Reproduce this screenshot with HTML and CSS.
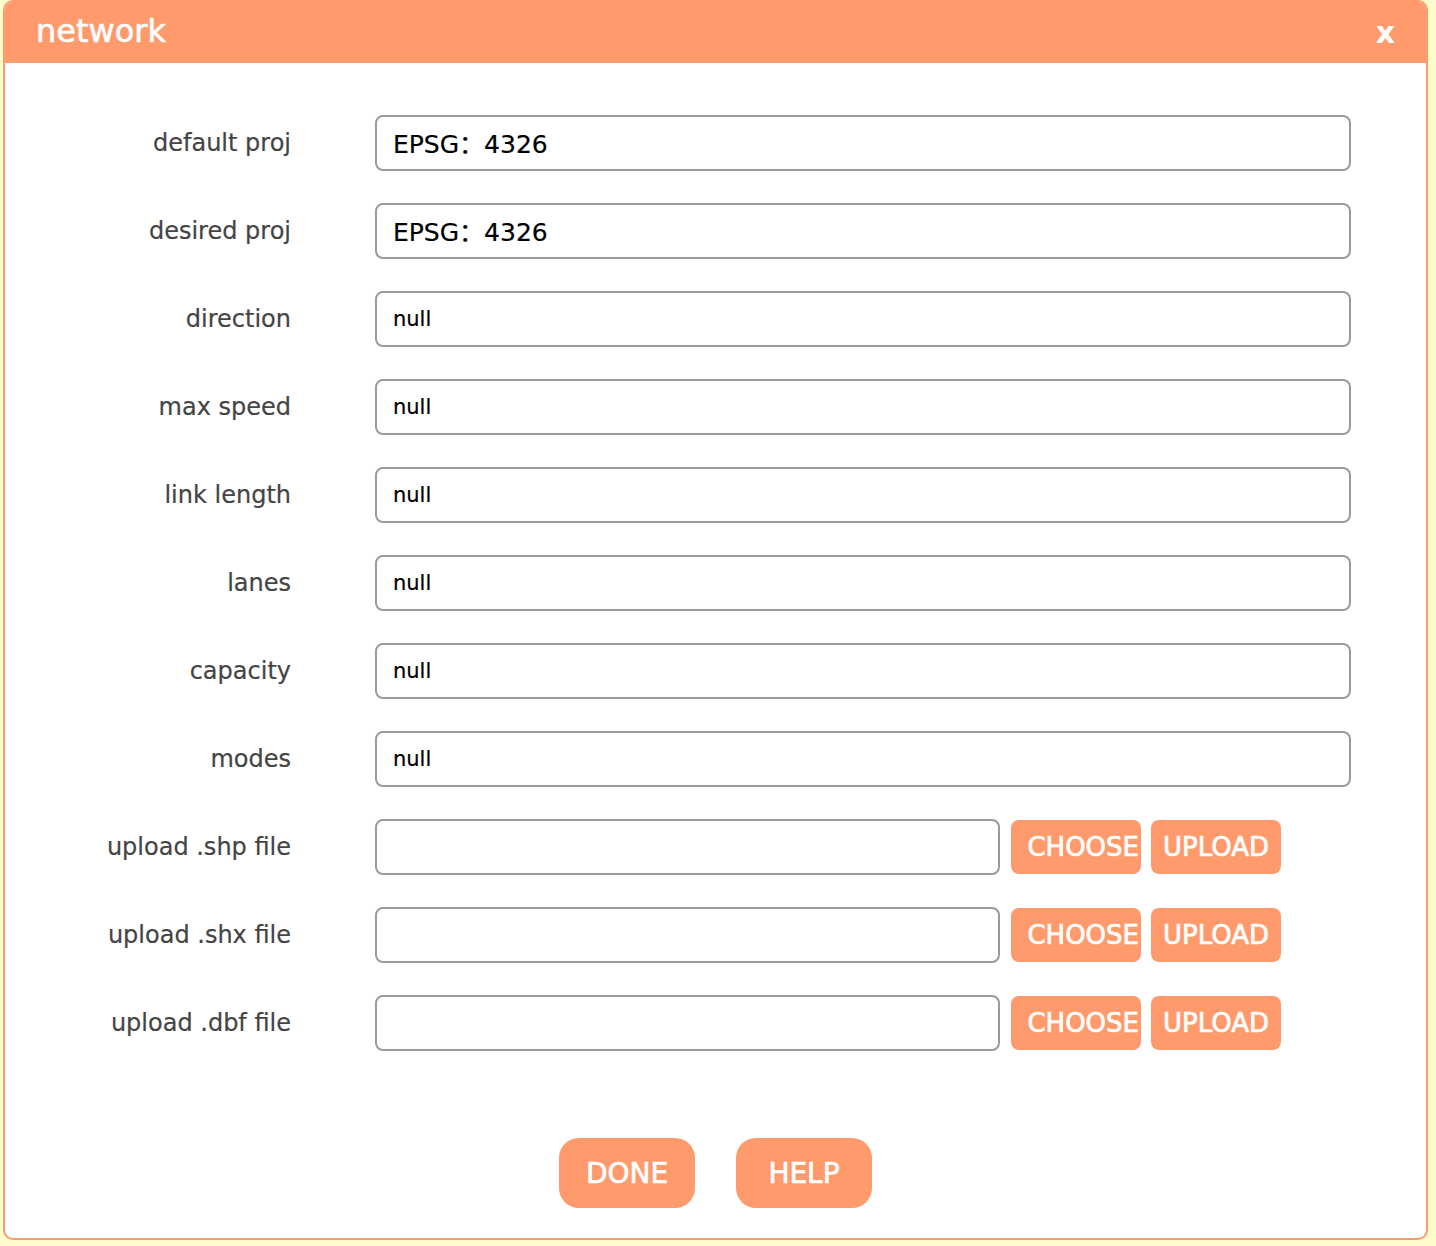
FILE: index.html
```html
<!DOCTYPE html>
<html>
<head>
<meta charset="utf-8">
<title>network</title>
<link rel="stylesheet" href="styles.css">
</head>
<body>
<div class="dialog">
  <div class="dialog-header">
    <span class="title">network</span>
    <span class="close">x</span>
  </div>
  <div class="dialog-body">
    <div class="row"><label class="label">default proj</label><div class="field big">EPSG：4326</div></div>
    <div class="row"><label class="label">desired proj</label><div class="field big">EPSG：4326</div></div>
    <div class="row"><label class="label">direction</label><div class="field">null</div></div>
    <div class="row"><label class="label">max speed</label><div class="field">null</div></div>
    <div class="row"><label class="label">link length</label><div class="field">null</div></div>
    <div class="row"><label class="label">lanes</label><div class="field">null</div></div>
    <div class="row"><label class="label">capacity</label><div class="field">null</div></div>
    <div class="row"><label class="label">modes</label><div class="field">null</div></div>
    <div class="row"><label class="label">upload .shp file</label><div class="field file"></div><button class="btn small">CHOOSE</button><button class="btn small">UPLOAD</button></div>
    <div class="row"><label class="label">upload .shx file</label><div class="field file"></div><button class="btn small">CHOOSE</button><button class="btn small">UPLOAD</button></div>
    <div class="row"><label class="label">upload .dbf file</label><div class="field file"></div><button class="btn small">CHOOSE</button><button class="btn small">UPLOAD</button></div>
  </div>
  <div class="actions">
    <button class="btn large">DONE</button>
    <button class="btn large">HELP</button>
  </div>
</div>
</body>
</html>
```

FILE: styles.css
```css
html, body {
  margin: 0;
  padding: 0;
  background: #fffccc;
}
body {
  font-family: "DejaVu Sans", "Noto Sans CJK SC", sans-serif;
  padding-left: 3px;
}
.dialog {
  width: 1421px;
  height: 1236px;
  border: 2px solid #fe9a6b;
  border-radius: 10px;
  background: #fff;
  display: flex;
  flex-direction: column;
  overflow: hidden;
}
.dialog-header {
  height: 63px;
  margin: -2px -2px 0 -2px;
  background: #fe9a6b;
  display: flex;
  align-items: center;
  justify-content: space-between;
  padding: 0 33px 0 33px;
  color: #fff;
}
.title {
  font-size: 32px;
  padding-bottom: 2px;
  -webkit-text-stroke: 0.6px #fff;
}
.close {
  font-size: 30px;
  font-weight: bold;
  padding-top: 2px;
}
.dialog-body {
  padding-top: 52px;
  display: flex;
  flex-direction: column;
  gap: 32px;
}
.row {
  display: flex;
  align-items: center;
  height: 56px;
}
.label {
  width: 286px;
  margin-right: 84px;
  text-align: right;
  font-size: 24px;
  color: #444;
  -webkit-text-stroke: 0.2px #444;
}
.field {
  width: 976px;
  height: 56px;
  box-sizing: border-box;
  border: 2px solid #9a9a9a;
  border-radius: 8px;
  background: #fff;
  display: flex;
  align-items: center;
  padding-left: 16px;
  font-size: 21px;
  color: #000;
  -webkit-text-stroke: 0.2px #000;
}
.field.big {
  font-size: 25px;
  padding-bottom: 3px;
}
.field.file {
  width: 625px;
  margin-right: 11px;
}
.btn {
  border: none;
  background: #fe9a6b;
  color: #fff;
  font-family: "DejaVu Sans", sans-serif;
  padding: 0;
  cursor: pointer;
  -webkit-text-stroke: 0.7px #fff;
}
.btn.small {
  width: 130px;
  height: 54px;
  border-radius: 8px;
  font-size: 26px;
  margin-right: 10px;
  white-space: nowrap;
  overflow: hidden;
  text-align: right;
  padding-right: 2px;
}
.btn.small + .btn.small {
  text-align: center;
  padding-right: 0;
}
.actions {
  margin-top: 87px;
  display: flex;
  justify-content: center;
  gap: 41px;
}
.btn.large {
  width: 136px;
  height: 70px;
  border-radius: 20px;
  font-size: 28px;
}
```
